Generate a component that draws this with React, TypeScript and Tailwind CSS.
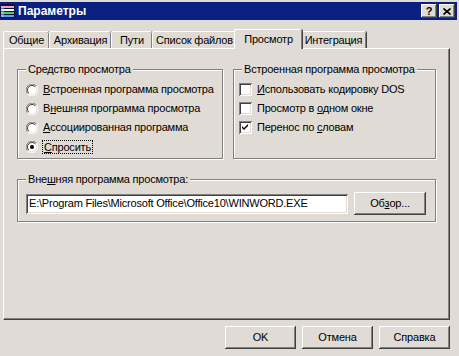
import React from 'react';

const face = 'bg-[#e0dcd5]';
const raised = 'shadow-[inset_-1px_-1px_#404040,inset_1px_1px_#ffffff,inset_-2px_-2px_#808080]';
const sunken = 'shadow-[inset_1px_1px_#808080,inset_-1px_-1px_#ffffff,inset_2px_2px_#404040,inset_-2px_-2px_#e0dcd5]';

const tabs = [
  { label: 'Общие', w: 'w-[46px]' },
  { label: 'Архивация', w: 'w-[62px]' },
  { label: 'Пути', w: 'w-[41px]' },
  { label: 'Список файлов', w: 'w-[84px]' },
  { label: 'Просмотр', w: 'w-[68px]', active: true },
  { label: 'Интеграция', w: 'w-[66px]' },
];

function Radio({ checked }: { checked?: boolean }) {
  return (
    <svg width="12" height="12" viewBox="0 0 12 12" className="shrink-0">
      <path d="M10.5 2.2 A5.5 5.5 0 0 0 1.5 9.8" fill="none" stroke="#808080" />
      <path d="M1.5 9.8 A5.5 5.5 0 0 0 10.5 2.2" fill="none" stroke="#ffffff" />
      <circle cx="6" cy="6" r="4.5" fill="#ffffff" />
      <path d="M9.2 2.8 A4.5 4.5 0 0 0 2.8 9.2" fill="none" stroke="#404040" />
      {checked && <circle cx="6" cy="6" r="2" fill="#000" />}
    </svg>
  );
}

function Check({ checked }: { checked?: boolean }) {
  return (
    <div className={`w-[13px] h-[13px] bg-white shrink-0 flex items-center justify-center ${sunken}`}>
      {checked && (
        <svg width="7" height="7" viewBox="0 0 7 7">
          <path d="M0 2 L2 4 L6 0 L6 2 L2 6 L0 4 Z" fill="#000" />
        </svg>
      )}
    </div>
  );
}

function U({ children }: { children: React.ReactNode }) {
  return <span className="underline underline-offset-[1px]">{children}</span>;
}

function Group({ title, className, children }: { title: React.ReactNode; className: string; children: React.ReactNode }) {
  return (
    <div className={`flex flex-col border border-[#808080] shadow-[inset_1px_1px_#ffffff,1px_1px_#ffffff] ${className}`}>
      <span className={`self-start -mt-[7px] ml-[8px] px-[2px] ${face}`}>{title}</span>
      {children}
    </div>
  );
}

function Button({ children, w = 'w-[72px]' }: { children: React.ReactNode; w?: string }) {
  return (
    <button className={`${w} h-[23px] ${face} ${raised} flex items-center justify-center text-[11px] tracking-[-0.2px]`}>
      {children}
    </button>
  );
}

export default function App() {
  return (
    <div className={`w-[459px] h-[356px] ${face} font-['Liberation_Sans',Arial,sans-serif] text-[11px] leading-[13px] tracking-[-0.2px] text-black flex flex-col pt-[2px] pr-[2px] overflow-hidden`}>
      {/* title bar */}
      <div className="h-[18px] bg-[#0a2080] flex items-center">
        <svg width="15" height="14" viewBox="0 0 15 14" className="shrink-0">
          <rect x="0" y="0" width="15" height="14" fill="#101040" />
          <rect x="1" y="2" width="13" height="2" fill="#f0a0c0" />
          <rect x="1" y="5" width="13" height="2" fill="#ffffff" />
          <rect x="1" y="8" width="13" height="2" fill="#40d080" />
          <rect x="1" y="11" width="13" height="2" fill="#60a0f0" />
          <rect x="1" y="2" width="3" height="11" fill="#c0c0ff" opacity="0.5" />
        </svg>
        <span className="ml-[3px] text-white font-bold text-[12px] tracking-normal">Параметры</span>
        <div className="ml-auto flex gap-[2px] mr-[2px]">
          <div className={`w-[16px] h-[14px] ${face} ${raised} flex items-center justify-center font-bold text-[11px] leading-none`}>?</div>
          <div className={`w-[16px] h-[14px] ${face} ${raised} flex items-center justify-center`}>
            <svg width="8" height="7" viewBox="0 0 8 7">
              <path d="M0.5 0.5 L7.5 6.5 M7.5 0.5 L0.5 6.5" stroke="#000" strokeWidth="1.6" />
            </svg>
          </div>
        </div>
      </div>

      {/* tabs */}
      <div className="flex items-end mt-[8px] ml-[3px] h-[20px] relative z-10">
        {tabs.map((t) =>
          t.active ? (
            <div
              key={t.label}
              className={`${t.w} h-[20px] -mx-[2px] -mb-[1px] ${face} border-t border-l border-white rounded-t-[2px] shadow-[inset_-1px_0_#808080,1px_0_#404040] flex items-start justify-center pt-[3px] relative`}
            >
              {t.label}
            </div>
          ) : (
            <div
              key={t.label}
              className={`${t.w} h-[17px] border-t border-l border-white rounded-t-[2px] shadow-[inset_-1px_0_#808080,1px_0_#404040] flex items-start justify-center pt-[2px]`}
            >
              {t.label}
            </div>
          )
        )}
      </div>

      {/* panel */}
      <div className="ml-[3px] w-[447px] h-[272px] border-t border-l border-white border-r border-b border-r-[#404040] border-b-[#404040] shadow-[inset_-1px_-1px_#808080] pt-[20px] pl-[13px]">
        <div className="flex gap-[10px]">
          <Group title="Средство просмотра" className="w-[206px]">
            <div className="flex flex-col mt-[4px] pb-[2px] pl-[8px]">
              <div className="h-[19px] flex items-center gap-[5px]"><Radio /><span><U>В</U>строенная программа просмотра</span></div>
              <div className="h-[19px] flex items-center gap-[5px]"><Radio /><span>В<U>н</U>ешняя программа просмотра</span></div>
              <div className="h-[19px] flex items-center gap-[5px]"><Radio /><span><U>А</U>ссоциированная программа</span></div>
              <div className="h-[19px] flex items-center gap-[4px]">
                <Radio checked />
                <span className="border border-dotted border-black px-px leading-[12px]"><U>С</U>просить</span>
              </div>
            </div>
          </Group>
          <Group title="Встроенная программа просмотра" className="w-[203px]">
            <div className="flex flex-col mt-[4px] pl-[5px]">
              <div className="h-[19px] flex items-center gap-[5px]"><Check /><span><U>И</U>спользовать кодировку DOS</span></div>
              <div className="h-[19px] flex items-center gap-[5px]"><Check /><span>Просмотр в <U>о</U>дном окне</span></div>
              <div className="h-[19px] flex items-center gap-[5px]"><Check checked /><span>Перенос по <U>с</U>ловам</span></div>
            </div>
          </Group>
        </div>

        <Group title={<>Вне<U>ш</U>няя программа просмотра:</>} className="w-[419px] mt-[20px]">
          <div className="flex items-center gap-[6px] mt-[6px] pb-[6px] pl-[8px]">
            <div className={`w-[322px] h-[20px] bg-white ${sunken} flex items-center pl-[3px] whitespace-nowrap overflow-hidden`}>
              E:\Program Files\Microsoft Office\Office10\WINWORD.EXE
            </div>
            <Button>Об<U>з</U>ор...</Button>
          </div>
        </Group>
      </div>

      {/* bottom buttons */}
      <div className="flex justify-end gap-[6px] mt-[6px] w-[450px]">
        <Button w="w-[71px]">OK</Button>
        <Button w="w-[71px]">Отмена</Button>
        <Button w="w-[71px]">Справка</Button>
      </div>
    </div>
  );
}
